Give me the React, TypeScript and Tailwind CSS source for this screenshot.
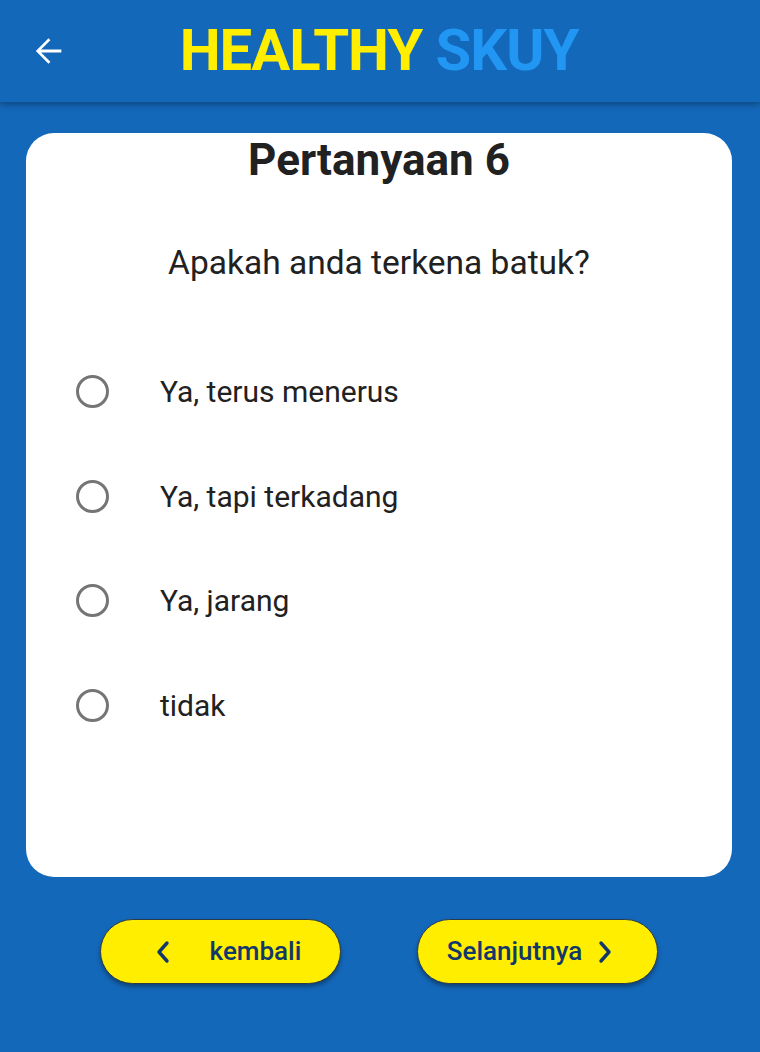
import React, { useState } from 'react';

const options = ['Ya, terus menerus', 'Ya, tapi terkadang', 'Ya, jarang', 'tidak'];

export default function App() {
  const [selected, setSelected] = useState<number | null>(null);

  return (
    <div className="min-h-[1052px] bg-[#1468BA] font-['Roboto',sans-serif] flex flex-col">
      {/* app bar */}
      <div className="h-[102px] relative flex items-center justify-center shadow-[0_3px_6px_rgba(0,0,0,0.3)] z-10">
        <button className="absolute left-[27px] top-[31px] text-white">
          <svg width="42" height="40" viewBox="0 0 24 24" fill="white">
            <path d="M20 11.1H7.83l5.59-5.59L12.3 4.4l-7.6 7.6 7.6 7.6 1.12-1.11L7.83 12.9H20v-1.8z" />
          </svg>
        </button>
        <h1 className="text-[58px] font-bold tracking-[-1px] leading-none mt-[-2px] ml-[-2px]">
          <span className="text-[#FFEE00]">HEALTHY</span>{' '}
          <span className="text-[#2196F3]">SKUY</span>
        </h1>
      </div>

      {/* card */}
      <div className="ml-[26px] mr-[28px] mt-[31px] h-[744px] bg-white rounded-[28px] flex flex-col items-center">
        <h2 className="text-[44px] font-bold text-[#212121] leading-[54px]">Pertanyaan 6</h2>
        <p className="mt-[55px] text-[33.5px] text-[#212121] leading-[42px]">Apakah anda terkena batuk?</p>
        <div className="self-stretch mt-[55px] flex flex-col">
          {options.map((o, i) => (
            <label
              key={o}
              onClick={() => setSelected(i)}
              className="h-[104.7px] flex items-center pl-[50px] cursor-pointer"
            >
              <span className="w-[33px] h-[33px] rounded-full border-[3px] border-[#757575] flex items-center justify-center">
                {selected === i && <span className="w-[16px] h-[16px] rounded-full bg-[#1468BA]" />}
              </span>
              <span className="ml-[51px] text-[30px] text-[#212121]">{o}</span>
            </label>
          ))}
        </div>
      </div>

      {/* navigation */}
      <div className="mt-[42px] flex justify-center gap-[76px] pr-[2px]">
        <button className="w-[241px] h-[65px] rounded-full bg-[#FFEE00] border border-[#2a3a4a] shadow-[0_3px_4px_rgba(0,0,0,0.35)] flex items-center justify-center gap-[36px] text-[#12386B] text-[26px] font-medium pl-[12px]">
          <svg width="22" height="24" viewBox="0 0 22 24" fill="none" stroke="#12386B" strokeWidth="3.4" strokeLinecap="round" strokeLinejoin="round">
            <path d="M15 3l-8 9 8 9" />
          </svg>
          <span>kembali</span>
        </button>
        <button className="w-[241px] h-[65px] rounded-full bg-[#FFEE00] border border-[#2a3a4a] shadow-[0_3px_4px_rgba(0,0,0,0.35)] flex items-center justify-center gap-[12px] text-[#12386B] text-[26px] font-medium pr-[12px]">
          <span>Selanjutnya</span>
          <svg width="22" height="24" viewBox="0 0 22 24" fill="none" stroke="#12386B" strokeWidth="3.4" strokeLinecap="round" strokeLinejoin="round">
            <path d="M7 3l8 9-8 9" />
          </svg>
        </button>
      </div>
    </div>
  );
}
